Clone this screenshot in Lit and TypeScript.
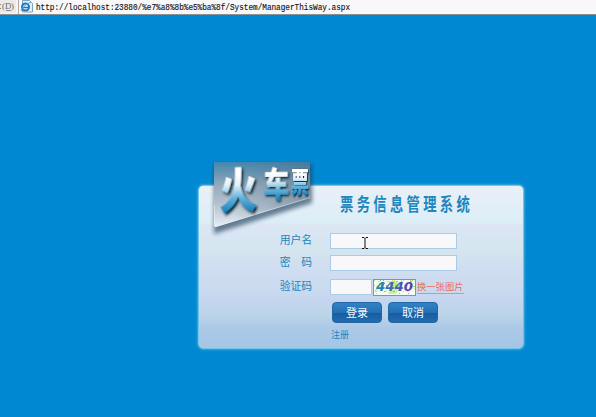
import { LitElement, html, css, svg } from "lit";
import { customElement, property } from "lit/decorators.js";

@customElement("address-bar")
class AddressBar extends LitElement {
  static styles = css`
    :host { display: flex; flex: none; height: 15px; box-sizing: border-box; background: #f6f5f4; border-bottom: 1px solid #8a9195; }
    .label { width: 16px; height: 13px; background: #eceae6; flex: none; }
    .field { flex: 1; display: flex; margin-left: 2px; border-left: 1px solid #aaa9a5; background: #f8f8fa; }
    svg { display: block; overflow: visible; }
    .url { font: 9.500px "Liberation Mono", monospace; fill: #111; stroke: #111; stroke-width: .15; }
    .key { font: 9px "Liberation Serif", serif; fill: #666; }
  `;
  render() {
    return html`
      <div class="label"><svg width="16" height="13">
        <path d="M.5 4v1M.5 8v1M6 10.500h5" stroke="#888" />
        <text class="key" x="2" y="9" textLength="12" lengthAdjust="spacingAndGlyphs">(D)</text>
      </svg></div>
      <div class="field"><svg width="340" height="14">
        <path d="M3.500 .5h7l3 3v8.500h-10z" fill="#e4f1fb" stroke="#7ba4c4" />
        <circle cx="6.500" cy="7" r="3.500" fill="#eef7fd" stroke="#2377b8" stroke-width="2" />
        <path d="M4 7.500h6" stroke="#2377b8" stroke-width="1.500" />
        <path d="M2 11Q3 6 12 2" fill="none" stroke="#5ca5d8" />
        <text class="url" x="17" y="9.500" textLength="314" lengthAdjust="spacingAndGlyphs">http://localhost:23880/%e7%a8%8b%e5%ba%8f/System/ManagerThisWay.aspx</text>
      </svg></div>`;
  }
}

@customElement("ticket-logo")
class TicketLogo extends LitElement {
  static styles = css`
    :host { display: block; }
    svg { display: block; overflow: visible; }
    text { font-family: "Noto Sans CJK SC", sans-serif; font-weight: 900; font-size: 40px; }
  `;
  glyph(char: string, transform: string) {
    return svg`<g transform=${transform}><text fill="url(#ink)" filter="url(#soft)">${char}</text></g>`;
  }
  render() {
    return html`<svg width="110" height="80" viewBox="0 0 110 80">
      <defs>
        <linearGradient id="plate" x1="0" y1="0" x2="0" y2="1">
          <stop offset="0" stop-color="#4287b0" /><stop offset=".2" stop-color="#7299b3" /><stop offset=".35" stop-color="#93a9bb" />
          <stop offset=".65" stop-color="#b4c2d0" /><stop offset="1" stop-color="#e8eef5" />
        </linearGradient>
        <linearGradient id="side" x1="0" x2="1"><stop offset=".2" stop-color="#52718a" stop-opacity="0" /><stop offset="1" stop-color="#4f6980" stop-opacity=".45" /></linearGradient>
        <linearGradient id="ink" gradientUnits="userSpaceOnUse" x1="0" y1="-34" x2="0" y2="3">
          <stop offset=".15" stop-color="#ffffff" /><stop offset=".4" stop-color="#e4f2f9" /><stop offset=".7" stop-color="#61b2dc" /><stop offset="1" stop-color="#1b82bd" />
        </linearGradient>
        <filter id="blur" x="-20%" y="-20%" width="140%" height="150%"><feGaussianBlur stdDeviation="2.200" /></filter>
        <filter id="soft" x="-20%" y="-20%" width="150%" height="150%"><feDropShadow dx="1.800" dy="1.800" stdDeviation="1.300" flood-color="#061b2b" flood-opacity="1" /></filter>
      </defs>
      <path d="M4 4H102V43L4 74Z" fill="#243f5b" opacity=".65" filter="url(#blur)" />
      <path d="M4 2H100V38L6 67Q4 67.500 4 65Z" fill="url(#plate)" />
      <path d="M4 2H100V38L6 67Q4 67.500 4 65Z" fill="url(#side)" />
      <path d="M4.500 45V65Q4.500 67 6 66.500L100 37.500" fill="none" stroke="#edf5fa" stroke-opacity=".6" stroke-width=".7" />
      ${this.glyph("火", "matrix(.94 -.04 0 1.200 9.500 48.500)")}
      ${this.glyph("车", "matrix(.64 -.01 0 .85 53.500 37)")}
      ${this.glyph("票", "matrix(.45 0 0 .71 81 32.500)")}
    </svg>`;
  }
}

@customElement("captcha-image")
class CaptchaImage extends LitElement {
  static styles = css`
    :host { display: block; }
    svg { display: block; }
    text { font: italic bold 13px "DejaVu Sans", sans-serif; }
  `;
  render() {
    const dots = Array.from({ length: 65 }, (_, i) => [1 + (i * 17) % 41, 1 + (i * i * 3 + i * 7) % 15]);
    return html`<svg width="43" height="17">
      <defs><linearGradient id="digits"><stop offset="0" stop-color="#1793a0" /><stop offset=".4" stop-color="#4569b5" /><stop offset="1" stop-color="#6535b0" /></linearGradient></defs>
      <rect x=".5" y=".5" width="42" height="16" fill="#f4fbf4" stroke="#3cadd3" />
      <path d="M16 2h8l3 5-4 8h-8l3-7z" fill="#c4f59b" />
      ${dots.map(([x, y], i) => svg`<rect x=${x} y=${y} width="1" height="1" fill=${["#8be05b", "#b7ec8c", "#e7e45c", "#69cf81"][i % 4]} />`)}
      <path d="M2 12l8-9M20 2l9 10M16 3l5 5" stroke="#9aeb73" fill="none" />
      <text x="3" y="12" fill="url(#digits)" textLength="37" lengthAdjust="spacingAndGlyphs">4440</text>
    </svg>`;
  }
}

@customElement("form-row")
class FormRow extends LitElement {
  @property() label = "";
  static styles = css`
    :host { display: flex; height: 16px; align-items: center; }
    .label { width: 51px; box-sizing: border-box; padding-left: .7px; flex: none; font-size: 10.800px; line-height: 14px; margin-bottom: 2px; color: #2385bd; white-space: pre; }
  `;
  render() {
    return html`<span class="label">${this.label}</span><slot></slot>`;
  }
}

@customElement("app-root")
class AppRoot extends LitElement {
  static styles = css`
    :host { display: flex; flex-direction: column; height: 417px; overflow: hidden; background: #0089d2; font-family: "Liberation Sans", "Noto Sans CJK SC", sans-serif; }
    .stage { padding: 170px 0 0 198px; }
    .card { position: relative; width: 326px; height: 164px; box-sizing: border-box; border: 1px solid #70c3e9; border-radius: 5px; box-shadow: 0 0 2px 1px #3ba4d9; padding: 9px 0 0 80px;
      background: linear-gradient(#e9f0f8 0, #e2eef7 20px, #dceef7 36px, #dde7f4 39px, #d8e5f3 50px, #d5e6ef 62px, #d0def0 80px, #cbdbf0 100px, #c4d6ef 115px, #bcd5e8 128px, #acc9e7 142px, #a5c5e5 100%); }
    .logo { position: absolute; left: 11px; top: -26px; }
    .title { display: block; margin-left: 61px; overflow: visible; }
    .title text { font: bold 18px "Noto Sans CJK SC", sans-serif; letter-spacing: 4.500px; fill: #2086be; }
    .rows { display: flex; flex-direction: column; margin-top: 16px; }
    .password { margin-top: 6px; }
    .verify { margin-top: 8px; }
    .input { width: 127px; height: 16px; box-sizing: border-box; border: 1px solid #a9cbe5; background: #f8f8fa; flex: none; }
    .input.short { width: 42px; }
    .cursor { display: block; margin: 2px 0 0 30px; overflow: visible; }
    captcha-image { margin-left: 1px; }
    .refresh { font-size: 9.300px; line-height: 11px; color: #ed6b5c; border-bottom: 1px solid #ed8b80; margin: 2px 0 0 1px; white-space: nowrap; }
    .buttons { display: flex; gap: 6px; margin: 7px 0 0 53px; }
    .button { width: 50px; height: 21px; box-sizing: border-box; border: 1px solid #2266a5; border-radius: 4px; background: linear-gradient(#3183c6, #2470b5 50%, #185c9f 55%, #216cae); color: #f1f8ff; font-size: 11px; line-height: 20px; text-align: center; }
    .register { margin: 6px 0 0 52px; font-size: 9px; line-height: 12px; color: #1d83c2; }
  `;
  render() {
    return html`
      <address-bar></address-bar>
      <div class="stage"><div class="card">
        <svg class="title" width="140" height="22"><text transform="scale(.74 1)" x="0" y="16">票务信息管理系统</text></svg>
        <div class="rows">
          <form-row label="用户名"><div class="input"><svg class="cursor" width="8" height="13">
            <path d="M1 1.500h2l1 1 1-1h2M1 12.500h2l1-1 1 1h2M4 2.500v9" fill="none" stroke="#111" />
          </svg></div></form-row>
          <form-row class="password" label="密　码"><div class="input"></div></form-row>
          <form-row class="verify" label="验证码"><div class="input short"></div><captcha-image></captcha-image><span class="refresh">换一张图片</span></form-row>
        </div>
        <div class="buttons"><div class="button">登录</div><div class="button">取消</div></div>
        <div class="register">注册</div>
        <ticket-logo class="logo"></ticket-logo>
      </div></div>`;
  }
}
